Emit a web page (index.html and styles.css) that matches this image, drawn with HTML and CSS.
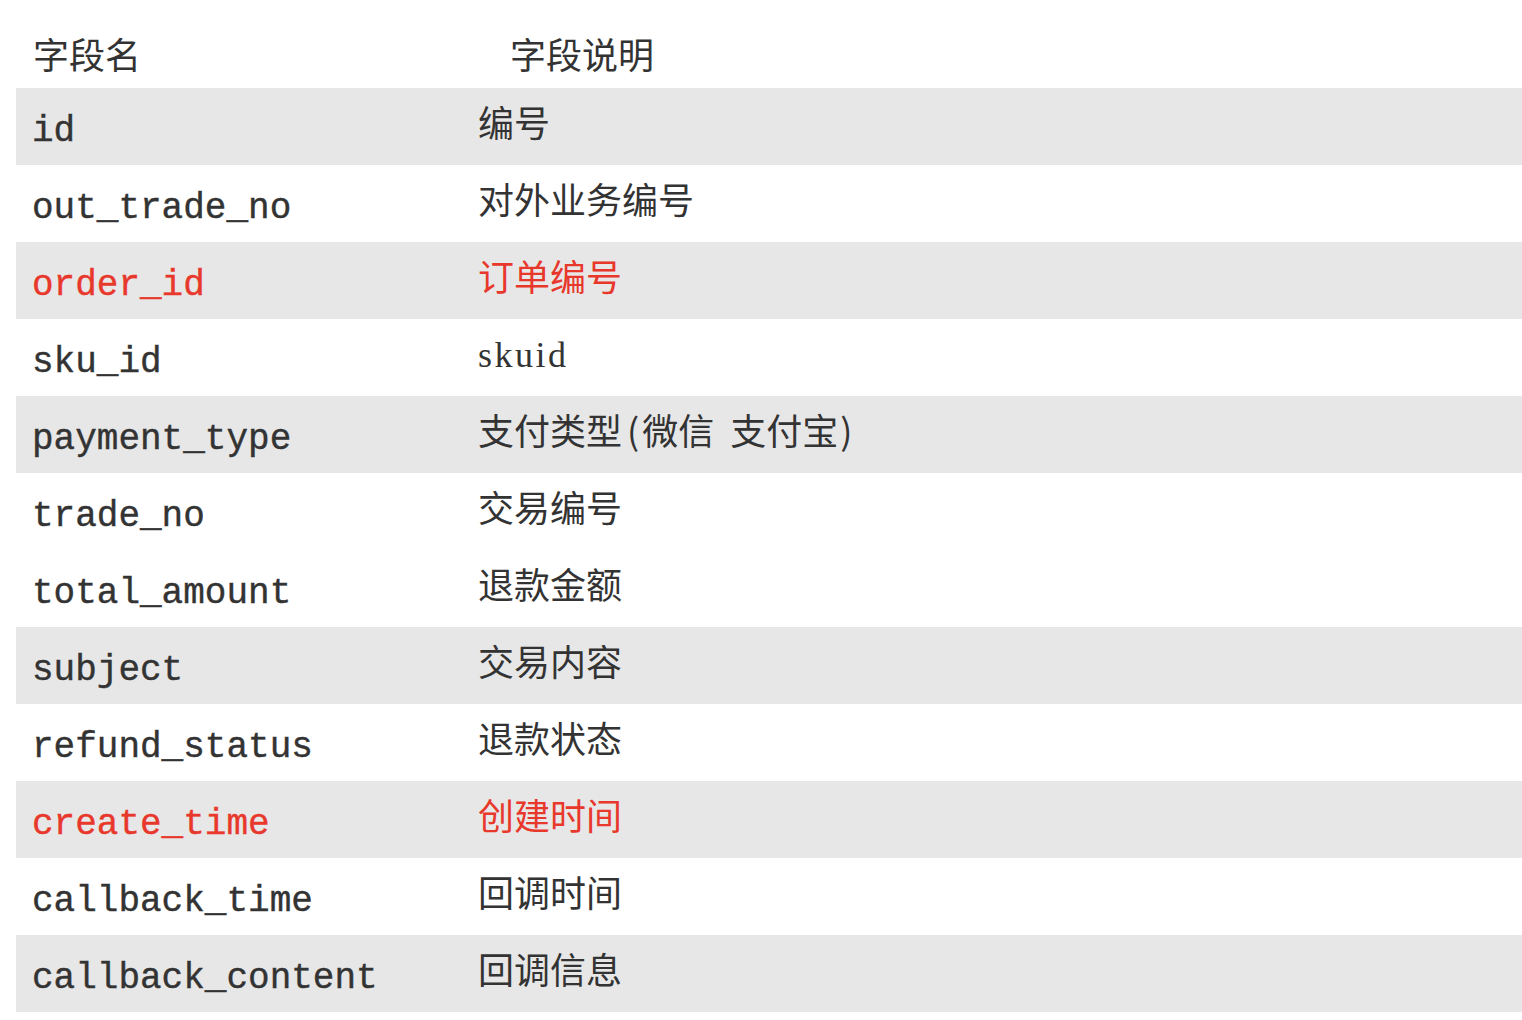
FILE: index.html
```html
<!DOCTYPE html>
<html lang="zh-CN">
<head>
<meta charset="utf-8">
<title>字段说明</title>
<link rel="stylesheet" href="styles.css">
</head>
<body>
<div class="table">
  <div class="row head">
    <div class="cell name-h">字段名</div>
    <div class="cell desc-h">字段说明</div>
  </div>
  <div class="row gray"><div class="cell name">id</div><div class="cell desc">编号</div></div>
  <div class="row"><div class="cell name">out_trade_no</div><div class="cell desc">对外业务编号</div></div>
  <div class="row gray red"><div class="cell name">order_id</div><div class="cell desc">订单编号</div></div>
  <div class="row"><div class="cell name">sku_id</div><div class="cell desc latin">skuid</div></div>
  <div class="row gray"><div class="cell name">payment_type</div><div class="cell desc">支付类型<span class="paren-l">(</span>微信&nbsp; 支付宝<span class="paren-r">)</span></div></div>
  <div class="row"><div class="cell name">trade_no</div><div class="cell desc">交易编号</div></div>
  <div class="row"><div class="cell name">total_amount</div><div class="cell desc">退款金额</div></div>
  <div class="row gray"><div class="cell name">subject</div><div class="cell desc">交易内容</div></div>
  <div class="row"><div class="cell name">refund_status</div><div class="cell desc">退款状态</div></div>
  <div class="row gray red"><div class="cell name">create_time</div><div class="cell desc">创建时间</div></div>
  <div class="row"><div class="cell name">callback_time</div><div class="cell desc">回调时间</div></div>
  <div class="row gray"><div class="cell name">callback_content</div><div class="cell desc">回调信息</div></div>
</div>
</body>
</html>
```
FILE: styles.css
```css
html, body {
  margin: 0;
  padding: 0;
  background: #ffffff;
}

body {
  color: #333333;
  overflow: hidden;
}

.table {
  margin-left: 16px;
  display: flex;
  flex-direction: column;
}

.row {
  display: grid;
  grid-template-columns: 462px 1fr;
  height: 77px;
}

.row.head {
  height: 88px;
}

.row.gray {
  background: #e7e7e7;
}

.row.red {
  color: #e8382c;
}

.cell {
  font-size: 36px;
  line-height: 36px;
  white-space: pre;
}

.name {
  font-family: "Liberation Mono", "Noto Sans CJK SC", monospace;
  padding-left: 16px;
  padding-top: 26px;
  -webkit-text-stroke: 0.4px currentColor;
}

.desc {
  font-family: "Noto Sans CJK SC", sans-serif;
  padding-top: 15px;
}

.desc.latin {
  font-family: "Liberation Serif", serif;
  padding-top: 18px;
  letter-spacing: 2.5px;
}

.paren-l {
  padding-left: 5px;
  padding-right: 3px;
}

.paren-r {
  padding-left: 2px;
}

.name-h,
.desc-h {
  font-family: "Noto Sans CJK SC", sans-serif;
  padding-top: 35px;
}

.name-h {
  padding-left: 17px;
}

.desc-h {
  padding-left: 32px;
}
```
